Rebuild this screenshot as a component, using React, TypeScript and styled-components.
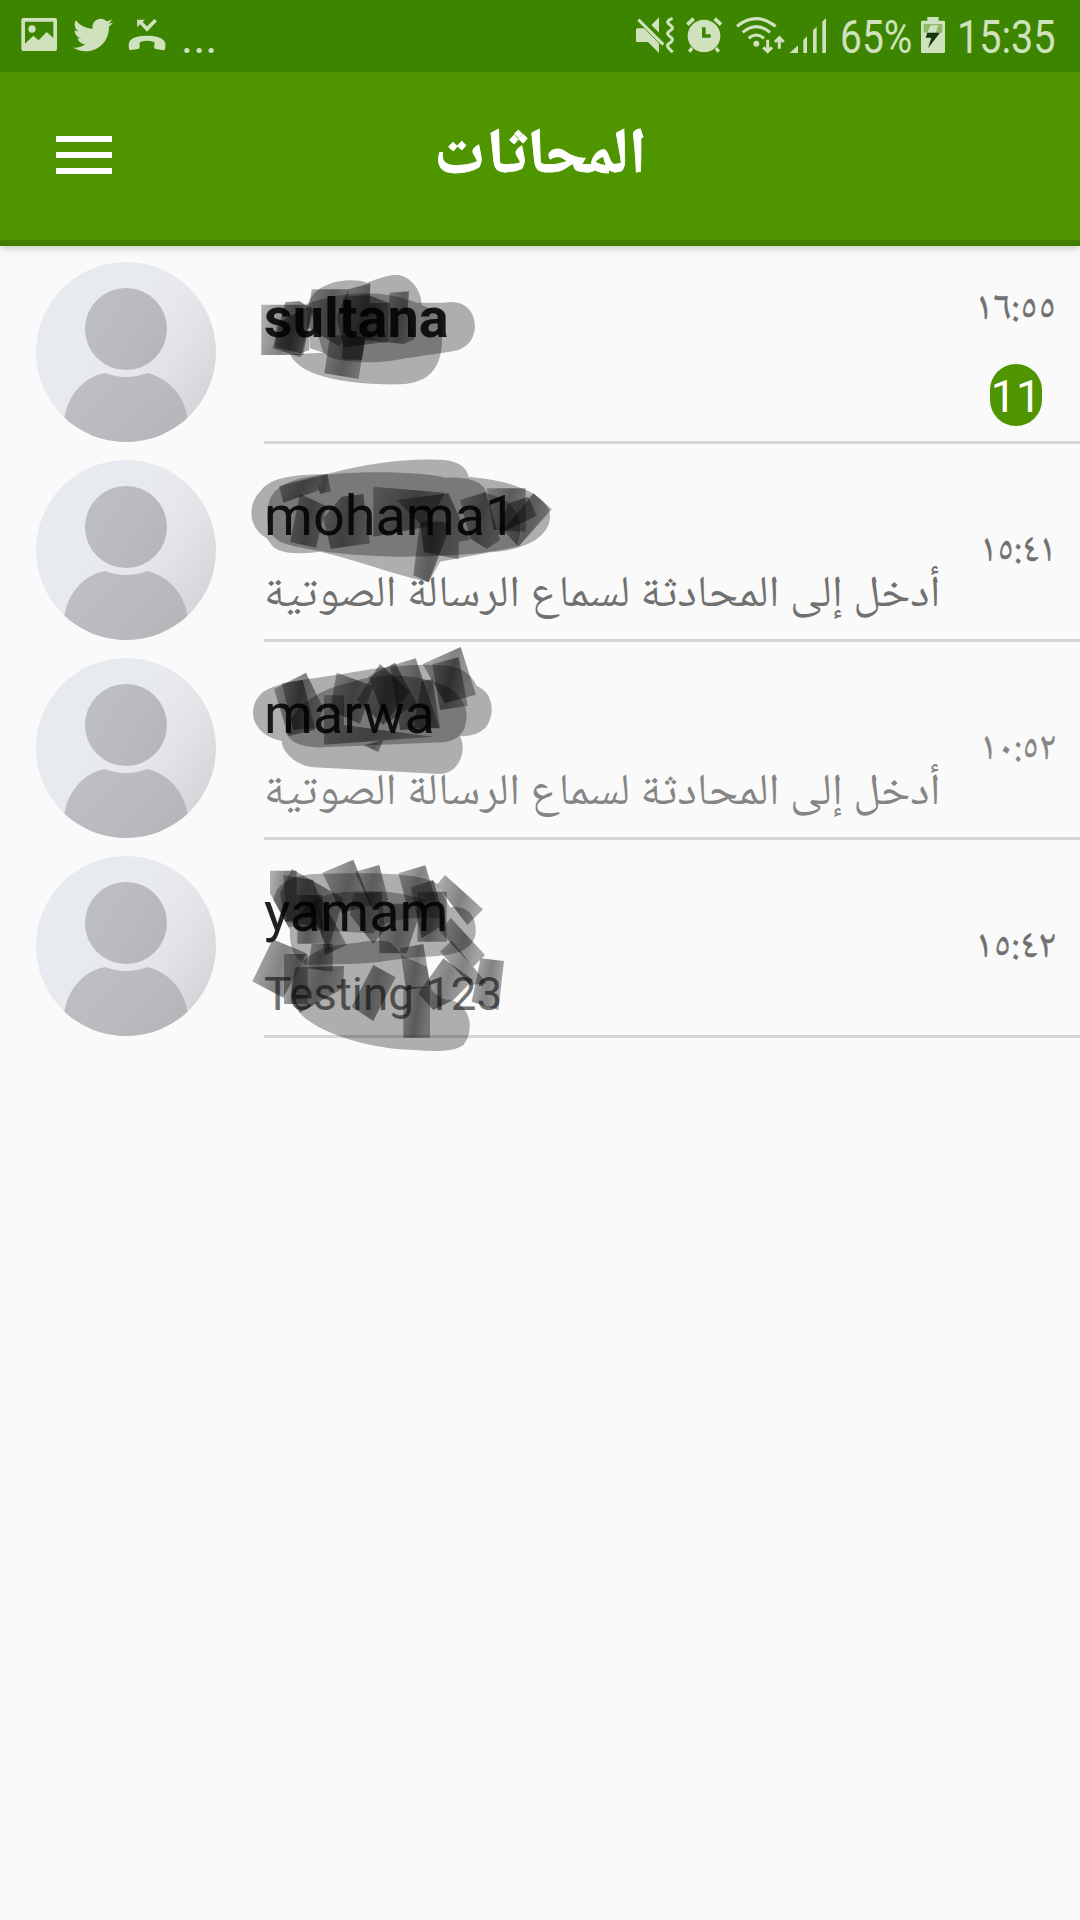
import React, { useLayoutEffect, useRef, useState } from 'react';
import styled, { createGlobalStyle } from 'styled-components';
import { FaTwitter } from 'react-icons/fa';

const GlobalStyle = createGlobalStyle`
  * { box-sizing: border-box; }
  body { margin: 0; background: #fafafa; }
`;

const ARABIC = '"Noto Naskh Arabic", "Noto Sans Arabic", "DejaVu Sans", sans-serif';
const LATIN = 'Roboto, "Liberation Sans", sans-serif';
const ICON = '#cfe2bd';

const FitBox = styled.span<{ $width: number }>`
  display: block;
  flex: none;
  width: ${(p) => p.$width}px;
  white-space: nowrap;
`;
const FitInner = styled.span`
  display: inline-block;
  transform-origin: 0 50%;
`;

/* Condenses or widens one line of text to an exact width. */
function Fit({ width, children, rtl }: { width: number; children: string; rtl?: boolean }) {
  const ref = useRef<HTMLSpanElement>(null);
  const [scale, setScale] = useState(1);
  useLayoutEffect(() => {
    if (ref.current) setScale(width / ref.current.offsetWidth);
  }, [width, children]);
  return (
    <FitBox $width={width}>
      <FitInner ref={ref} dir={rtl ? 'rtl' : 'ltr'} style={{ transform: `scaleX(${scale})` }}>
        {children}
      </FitInner>
    </FitBox>
  );
}

const Screen = styled.main`
  width: 1080px;
  height: 1920px;
  display: flex;
  flex-direction: column;
  background: #fafafa;
  overflow: hidden;
`;
const StatusBar = styled.header`
  height: 72px;
  flex: none;
  display: flex;
  align-items: flex-start;
  justify-content: space-between;
  padding: 0 24px 0 20px;
  background: #3d8500;
  color: ${ICON};
  z-index: 2;
`;
const StatusGroup = styled.div`
  display: flex;
  height: 72px;
`;
const Glyph = styled.svg<{ $gap?: number }>`
  display: block;
  flex: none;
  height: 72px;
  margin-left: ${(p) => p.$gap ?? 0}px;
  fill: ${ICON};
`;
const Bird = styled(FaTwitter)`
  width: 40px;
  height: 40px;
  margin: 15px 0 0 15px;
`;
const StatusText = styled.div<{ $gap: number }>`
  margin-left: ${(p) => p.$gap}px;
  padding-top: 11px;
  font: 400 46px/53px ${LATIN};
`;

const AppBar = styled.nav`
  height: 174px;
  flex: none;
  display: grid;
  grid-template-columns: 168px 1fr 168px;
  background: #4f9500;
  border-bottom: 6px solid #417e00;
  box-shadow: 0 2px 8px rgba(0, 0, 0, 0.2);
  z-index: 1;
`;
const MenuButton = styled.button`
  border: 0;
  background: none;
  padding: 64px 56px 0;
  display: flex;
  flex-direction: column;
  gap: 10px;
`;
const MenuLine = styled.span`
  width: 56px;
  height: 6px;
  background: #fff;
`;
const Title = styled.h1`
  margin: 0;
  padding-top: 53px;
  display: flex;
  justify-content: center;
  color: #fff;
  font: 700 64px/70px ${ARABIC};
  -webkit-text-stroke: 0.8px #fff;
`;

const List = styled.ul`
  list-style: none;
  margin: 0;
  padding: 0;
`;
const Row = styled.li`
  position: relative;
  height: 198px;
  display: flex;
`;
const Avatar = styled.svg`
  display: block;
  flex: none;
  width: 180px;
  height: 180px;
  margin: 16px 48px 0 36px;
`;
const Body = styled.div`
  flex: 1;
  display: flex;
  justify-content: space-between;
  border-bottom: 3px solid #d5d5d5;
`;
const Texts = styled.div`
  display: flex;
  flex-direction: column;
`;
const Name = styled.div<{ $bold?: boolean }>`
  height: 111px;
  padding-top: 40px;
  color: #212121;
  font: ${(p) => (p.$bold ? 700 : 400)} 55.8px/64px ${LATIN};
`;
const Message = styled.div<{ $arabic?: boolean; $faint?: boolean }>`
  color: ${(p) => (p.$faint ? '#858585' : '#707070')};
  font: 400 ${(p) => (p.$arabic ? 44 : 45.7)}px/60px ${(p) => (p.$arabic ? ARABIC : LATIN)};
  padding-top: ${(p) => (p.$arabic ? 12 : 14)}px;
`;
const Meta = styled.div<{ $top: number }>`
  display: flex;
  flex-direction: column;
  align-items: flex-end;
  padding: ${(p) => p.$top}px 24px 0 0;
`;
const Time = styled.div<{ $faint?: boolean }>`
  color: ${(p) => (p.$faint ? '#858585' : '#707070')};
  font: 400 40px/40px ${ARABIC};
  -webkit-text-stroke: 0.4px currentColor;
`;
const Badge = styled.div`
  width: 52px;
  height: 62px;
  margin: 34px 14px 0 0;
  border-radius: 26px;
  background: #4f9500;
  color: #fff;
  font: 400 45px/66px ${LATIN};
  text-align: center;
`;
const Marks = styled.svg<{ $top: number }>`
  position: absolute;
  left: 240px;
  top: ${(p) => p.$top}px;
  pointer-events: none;
  overflow: visible;
`;

type Sketch = { top: number; w: number; h: number; blobs: string[]; tiles: string[] };
type Chat = {
  name: string;
  bold?: boolean;
  message?: string;
  arabic?: boolean;
  faint?: boolean;
  time: string;
  timeWidth: number;
  unread?: number;
  sketch: Sketch;
};

const CHATS: Chat[] = [
  {
    name: 'sultana', bold: true, time: '١٦:٥٥', timeWidth: 81, unread: 11,
    sketch: {
      top: 14, w: 260, h: 140,
      blobs: [
        'M205 130C225 65 330 50 380 68C430 50 450 43 475 45C515 50 545 95 545 135L600 160Q608 200 606 255C600 320 570 370 480 373C360 376 250 360 190 325Q160 305 150 283L250 278Z',
        'M200 132C300 95 420 85 530 128L610 128C680 115 705 160 705 200Q703 250 655 270C600 282 520 290 450 303C370 312 270 305 255 280L210 265Z',
      ],
      tiles: [
        '64,134 210,134 215,150 190,285 64,285', '136,126 179,124 220,150 182,292 98,265', '110,190 205,140 208,270 182,280 105,262',
        '215,88 325,88 325,180 300,260 200,200', '325,88 391,70 389,130 445,128 445,245 310,262 290,170',
        '270,225 375,230 356,357 253,340', '449,98 507,94 503,150 524,238 492,252 440,247',
        '310,110 385,105 450,130 440,248 376,240 366,300 306,298',
      ],
    },
  },
  {
    name: 'mohama1', message: 'أدخل إلى المحادثة لسماع الرسالة الصوتية', arabic: true, time: '١٥:٤١', timeWidth: 76,
    sketch: {
      top: 6, w: 330, h: 200,
      blobs: [
        'M80 265C20 230 25 160 60 125C90 85 140 75 260 72C380 40 500 25 590 29C650 28 680 50 686 80L740 87C860 105 935 150 930 205C925 260 860 300 750 307L600 335L566 397C450 370 350 330 240 305Q120 320 95 285Z',
        'M85 170C90 100 180 80 270 73C420 60 570 70 615 83C690 80 730 95 740 130C840 155 855 220 830 290C730 315 600 320 480 320C330 318 180 300 120 275Q70 245 85 170Z',
      ],
      tiles: [
        '117,108 230,80 240,120 130,158', '230,80 262,72 273,124 240,132', '180,132 259,168 228,293 150,276', '305,140 370,132 390,280 272,297 250,205',
        '400,110 615,128 560,230 400,260', '470,150 625,130 690,270 656,275 656,328 552,306 540,220',
        '540,215 610,215 630,230 566,397 520,376', '660,150 738,126 780,270 740,297 690,265',
        '740,115 857,115 857,245 760,240', '880,130 935,178 835,290 790,240', '805,160 865,140 890,197 770,255',
      ],
    },
  },
  {
    name: 'marwa', message: 'أدخل إلى المحادثة لسماع الرسالة الصوتية', arabic: true, faint: true, time: '١٠:٥٢', timeWidth: 76,
    sketch: {
      top: -2, w: 330, h: 210,
      blobs: [
        'M125 303C30 285 20 200 65 160Q100 130 220 115C340 100 450 70 580 75Q680 70 710 137C765 160 765 230 735 265Q705 292 660 288C685 340 650 402 600 402L220 382C160 375 125 330 125 303Z',
        'M145 250C190 175 250 145 340 125C440 90 560 110 630 145Q690 190 678 245Q670 300 610 307L250 322Q150 325 135 270Z',
      ],
      tiles: [
        '102,147 198,98 250,205 225,270 145,288', '125,130 188,120 225,265 160,270', '290,98 400,138 360,252 270,210',
        '252,166 312,166 312,255 580,290 252,314', '420,72 510,155 430,255 350,180', '385,110 465,68 530,190 440,250',
        '450,78 527,55 598,263 480,270', '545,122 578,118 600,265 520,265', '548,72 662,21 708,164 615,190',
        '577,73 656,52 683,198 600,210', '370,316 430,300 415,336',
      ],
    },
  },
  {
    name: 'yamam', message: 'Testing 123', time: '١٥:٤٢', timeWidth: 81,
    sketch: {
      top: 10, w: 330, h: 210,
      blobs: [
        'M100 150Q110 85 210 73C370 68 530 65 590 100L630 172C690 165 710 205 707 250C700 300 650 318 560 320C450 325 420 342 310 342L200 345Q145 320 150 240Z',
        'M170 235Q180 130 330 125C480 115 600 150 618 205C530 200 440 200 400 250L310 245Z',
        'M155 425C150 370 190 305 280 288C370 275 410 268 450 276L490 318L560 350L575 420Q600 450 635 450C700 475 700 550 670 585C640 610 560 603 480 598C340 585 220 535 180 490Q158 465 155 425Z',
      ],
      tiles: [
        '90,62 170,62 170,230 145,230 90,130', '155,57 310,145 265,300 220,200 135,215 120,130',
        '130,75 220,90 250,235 140,215', '172,135 248,135 248,281 172,281', '220,100 320,285 255,315',
        '247,68 340,29 395,165 305,190', '345,65 418,45 445,150 395,175', '340,130 425,125 435,240 400,282 330,195',
        '475,70 556,46 588,150 500,165', '512,112 580,90 618,220 545,265', '532,125 620,125 620,275 532,275',
        '615,75 729,178 682,225 590,105', '415,162 550,160 500,310 418,310', '632,203 735,315 700,350 600,245',
        '98,268 200,310 130,443 37,394', '132,312 203,312 203,462 132,462', '215,282 278,282 278,365 203,355',
        '165,352 312,348 310,415 180,488 153,435', '400,345 467,382 400,513 335,470',
        '480,295 550,282 572,410 498,420', '490,410 570,410 570,563 490,563', '610,325 700,390 640,450 580,480 535,430',
        '635,272 740,400 690,405 600,305', '722,325 792,333 775,480 695,455',
      ],
    },
  },
];

function UserAvatar({ id }: { id: number }) {
  return (
    <Avatar viewBox="0 0 180 180">
      <defs>
        <linearGradient id={`disc${id}`} x1="0.1" y1="0.2" x2="0.9" y2="0.8">
          <stop offset="0" stopColor="#e7ebf0" />
          <stop offset="0.5" stopColor="#e7e9ee" />
          <stop offset="0.7" stopColor="#e4e3e7" />
          <stop offset="1" stopColor="#d6d6da" />
        </linearGradient>
        <linearGradient id={`person${id}`} x1="0" y1="0.2" x2="1" y2="0.8">
          <stop offset="0" stopColor="#bebec6" />
          <stop offset="1" stopColor="#b6b6b9" />
        </linearGradient>
        <clipPath id={`clip${id}`}><circle cx="90" cy="90" r="90" /></clipPath>
      </defs>
      <g clipPath={`url(#clip${id})`}>
        <rect width="180" height="180" fill={`url(#disc${id})`} />
        <circle cx="90" cy="67" r="41" fill={`url(#person${id})`} />
        <path d="M28 160C30 135 47 115 69 111Q90 119 111 111C133 116 150 135 152 160L152 180H28Z" fill={`url(#person${id})`} />
      </g>
    </Avatar>
  );
}

function Scribble({ data, id }: { data: Sketch; id: number }) {
  return (
    <Marks $top={data.top} width={data.w} height={data.h} viewBox={`0 0 ${data.w * 3} ${data.h * 3}`}>
      <defs>
        <linearGradient id={`tile${id}`} x1="0" y1="0" x2="1" y2="0.3">
          <stop offset="0" stopOpacity="0.28" />
          <stop offset="0.6" stopOpacity="0.48" />
          <stop offset="1" stopOpacity="0.34" />
        </linearGradient>
      </defs>
      {data.blobs.map((d) => <path key={d} d={d} fillOpacity="0.3" />)}
      {data.tiles.map((p) => <polygon key={p} points={p} fill={`url(#tile${id})`} />)}
    </Marks>
  );
}

function StatusIcons() {
  return (
    <StatusBar>
      <StatusGroup>
        <Glyph viewBox="60 0 114 216" width="38">
          <path fillRule="evenodd" d="M70 54H165Q171 54 171 60V147Q171 153 165 153H70Q64 153 64 147V60Q64 54 70 54ZM75 65V131L100 107L116 121L140 96L160 114V65Z" />
          <circle cx="96" cy="87" r="11" />
        </Glyph>
        <Bird />
        <Glyph viewBox="381 0 120 216" width="40" $gap={14}>
          <path d="M387 147Q388 151 392 150L415 147Q419 146 419 142V130Q419 126 423 125Q441 120 460 125Q464 126 464 130L462 142Q463 146 467 147L490 151Q494 151 495 147Q499 130 492 122Q480 107 441 107Q402 107 390 122Q384 130 387 147Z" />
          <path d="M411 59H435L428 66L441 79L463 57L471 64L441 95L420 73L412 82Z" />
        </Glyph>
        <StatusText $gap={14}>...</StatusText>
      </StatusGroup>
      <StatusGroup>
        <Glyph viewBox="45 0 120 216" width="40">
          <path d="M94 75L117 52V98ZM52 85H72L117 130V159L84 126H52Q48 126 48 122V89Q48 85 52 85Z" />
          <path d="M55 59L130 134M158 55Q140 62 144 69L156 80Q159 84 155 88L145 96Q141 101 145 105L156 115Q159 119 155 124L145 132Q140 138 145 143L158 157" fill="none" stroke={ICON} strokeWidth="9" />
        </Glyph>
        <Glyph viewBox="195 0 114 216" width="38" $gap={10}>
          <path fillRule="evenodd" d="M252 59A49 49 0 1 0 252 157A49 49 0 1 0 252 59ZM246 82H257V103H272V113H246Z" />
          <path d="M202 74L221 56M303 74L284 56" stroke={ICON} strokeWidth="11" />
          <path d="M216 144L208 155M288 144L296 155" stroke={ICON} strokeWidth="10" />
        </Glyph>
        <Glyph viewBox="345 0 150 216" width="50" $gap={12}>
          <path d="M351 79Q408 33 467 79M368 97Q409 63 450 97M386 115Q409 95 432 115M443 119V153M430 142L443 155L456 142M478 146V113M465 126L478 113L491 126" fill="none" stroke={ICON} strokeWidth="9" />
          <circle cx="409" cy="131" r="9" />
        </Glyph>
        <Glyph viewBox="507 0 114 216" width="38" $gap={4}>
          <path d="M509 159L534 136V159ZM550 120L561 109V159H550ZM579 91L590 80V159H579ZM607 65L618 54V159H607Z" />
        </Glyph>
        <StatusText $gap={13}><Fit width={72}>65%</Fit></StatusText>
        <Glyph viewBox="900 0 78 216" width="26" $gap={8}>
          <path d="M922 51H956V62H971Q975 62 975 66V155Q975 159 971 159H907Q903 159 903 155V66Q903 62 907 62H922Z" />
          <path d="M911 72H967V98H911Z" fill="#8db968" />
          <path d="M932 76H955L947 98H922Z" />
          <path d="M922 98H960L924 145L934 113H917Z" fill="#17350a" />
        </Glyph>
        <StatusText $gap={11}><Fit width={99}>15:35</Fit></StatusText>
      </StatusGroup>
    </StatusBar>
  );
}

export default function App() {
  return (
    <>
      <GlobalStyle />
      <Screen>
        <StatusIcons />
        <AppBar>
          <MenuButton aria-label="Menu"><MenuLine /><MenuLine /><MenuLine /></MenuButton>
          <Title><Fit width={213} rtl>المحاثات</Fit></Title>
        </AppBar>
        <List>
          {CHATS.map((c, i) => (
            <Row key={c.name}>
              <UserAvatar id={i} />
              <Body>
                <Texts>
                  <Name $bold={c.bold}>{c.name}</Name>
                  {c.message && (
                    <Message $arabic={c.arabic} $faint={c.faint}>
                      {c.arabic ? <Fit width={677} rtl>{c.message}</Fit> : c.message}
                    </Message>
                  )}
                </Texts>
                <Meta $top={c.unread ? 44 : 88}>
                  <Time $faint={c.faint}><Fit width={c.timeWidth}>{c.time}</Fit></Time>
                  {c.unread && <Badge>{c.unread}</Badge>}
                </Meta>
              </Body>
              <Scribble data={c.sketch} id={i} />
            </Row>
          ))}
        </List>
      </Screen>
    </>
  );
}
